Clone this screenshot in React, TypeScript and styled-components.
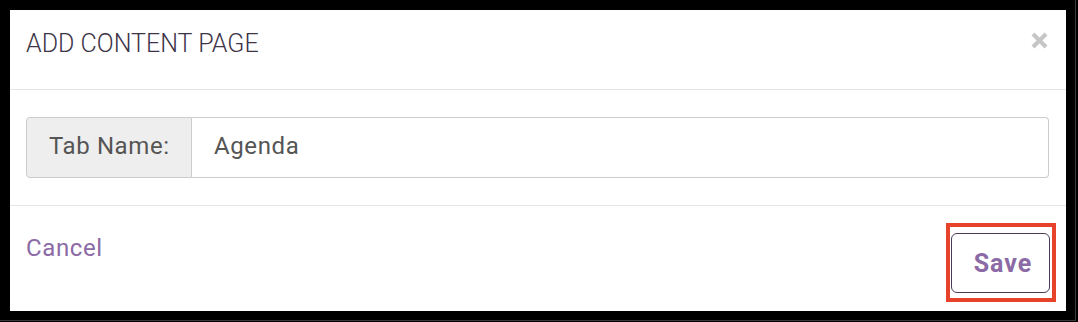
import React from 'react';
import styled, { createGlobalStyle } from 'styled-components';

const GlobalStyle = createGlobalStyle`
  html, body {
    margin: 0;
    padding: 0;
    background: #000;
  }
  * {
    box-sizing: border-box;
  }
`;

const CloseIcon = () => (
  <svg width="19" height="17" viewBox="0 0 19 17">
    <path d="M3 2 L16 15 M16 2 L3 15" stroke="#c6c6c6" strokeWidth="4.2" />
  </svg>
);

const App = () => {
  return (
    <Frame>
      <GlobalStyle />
      <Dialog>
        <Header>
          <Title>ADD CONTENT PAGE</Title>
          <CloseBtn aria-label="Close">
            <CloseIcon />
          </CloseBtn>
        </Header>
        <Body>
          <InputGroup>
            <Addon>Tab Name:</Addon>
            <TextInput defaultValue="Agenda" />
          </InputGroup>
        </Body>
        <Footer>
          <CancelLink>Cancel</CancelLink>
          <SaveWrap>
            <SaveBtn>Save</SaveBtn>
            <Highlight />
          </SaveWrap>
        </Footer>
      </Dialog>
    </Frame>
  );
};

export default App;

const Frame = styled.div`
  width: 1076px;
  height: 321px;
  padding: 10px 9px 9px 10px;
  border-right: 1px solid #3a3a3a;
  border-bottom: 1px solid #3a3a3a;
  background: #000;
`;
const Dialog = styled.div`
  display: flex;
  flex-direction: column;
  width: 100%;
  height: 100%;
  background: #fff;
  font-family: Roboto, 'Liberation Sans', sans-serif;
`;
const Header = styled.div`
  display: flex;
  justify-content: space-between;
  align-items: flex-start;
  height: 80px;
  padding: 19px 17px 0 16px;
  border-bottom: 1px solid #e5e5e5;
`;
const Title = styled.h4`
  margin: 0;
  font-size: 25px;
  line-height: 30px;
  font-weight: 300;
  color: #3d3448;
`;
const CloseBtn = styled.button`
  display: flex;
  padding: 0;
  margin-top: 3px;
  border: none;
  background: none;
  cursor: pointer;
`;
/* body */
const Body = styled.div`
  padding: 27px 17px 27px 16px;
  border-bottom: 1px solid #e5e5e5;
`;
const InputGroup = styled.div`
  display: flex;
  height: 61px;
`;
const Addon = styled.span`
  display: flex;
  align-items: center;
  width: 166px;
  padding: 0 0 3px 22px;
  background: #eee;
  border: 1px solid #ccc;
  border-radius: 4px 0 0 4px;
  font-size: 24px;
  letter-spacing: 0.6px;
  color: #555;
`;
const TextInput = styled.input`
  flex: 1;
  min-width: 0;
  padding: 0 22px 3px 22px;
  border: 1px solid #ccc;
  border-left: none;
  border-radius: 0 4px 4px 0;
  background: #fff;
  font-family: Roboto, 'Liberation Sans', sans-serif;
  font-size: 24px;
  letter-spacing: 0.6px;
  color: #555;
  outline: none;
`;
/* footer */
const Footer = styled.div`
  flex: 1;
  display: flex;
  justify-content: space-between;
  align-items: flex-start;
  padding: 27px 16px 0 16px;
`;
const CancelLink = styled.a`
  font-size: 24px;
  line-height: 31px;
  letter-spacing: 0.6px;
  color: #8b6aa6;
  cursor: pointer;
`;
const SaveWrap = styled.div`
  position: relative;
  display: flex;
`;
const SaveBtn = styled.button`
  width: 99px;
  height: 60px;
  padding: 0 0 0 5px;
  border: 1px solid #4a3b57;
  border-radius: 6px;
  background: #fff;
  font-family: Roboto, 'Liberation Sans', sans-serif;
  font-size: 25px;
  font-weight: 700;
  letter-spacing: 1px;
  color: #8b6aa6;
  cursor: pointer;
`;
const Highlight = styled.div`
  position: absolute;
  top: -10px;
  bottom: -9px;
  left: -5px;
  right: -6px;
  border: 4px solid #e6432a;
  pointer-events: none;
`;
